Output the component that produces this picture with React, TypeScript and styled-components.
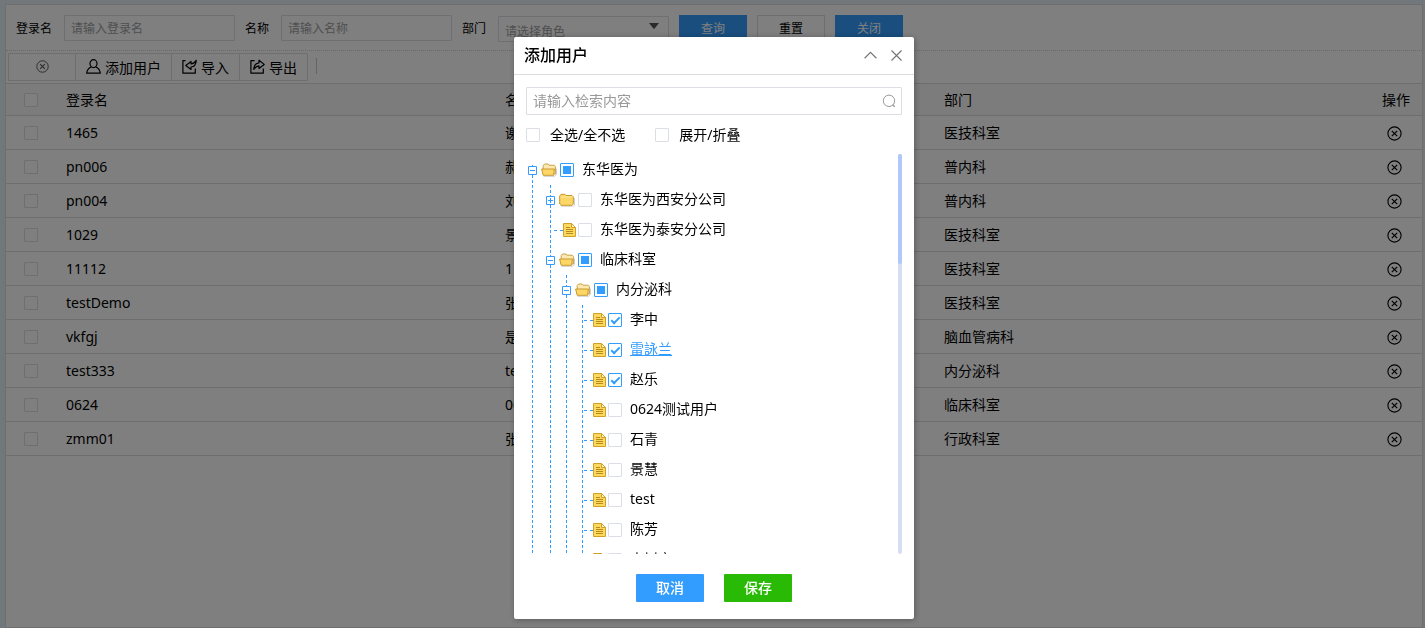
import React from "react";
import styled, { createGlobalStyle, css } from "styled-components";

const BLUE = "#339dff";
const BORDER = "#dcdcdc";
const FIELD_BORDER = "#dcdee6";

const GlobalStyle = createGlobalStyle`
  *, *::before, *::after { box-sizing: border-box; }
  body {
    margin: 0;
    background: #e4eff9;
    color: #000;
    font-family: "Noto Sans", "Noto Sans CJK SC", sans-serif;
    font-size: 14px;
    line-height: 20px;
    overflow: hidden;
  }
  button, input, select { font-family: inherit; color: inherit; }
  button { cursor: pointer; }
  svg { display: block; flex: none; }
`;

/* ---------- shared controls ---------- */

const Checkbox = styled.input.attrs({ type: "checkbox" })`
  appearance: none;
  flex: none;
  display: grid;
  place-items: center;
  width: 14px;
  height: 14px;
  margin: 0;
  border: 1px solid ${FIELD_BORDER};
  border-radius: 1px;
  background: #fff;

  &:checked,
  &:indeterminate {
    border-color: ${BLUE};
  }
  &:checked::after {
    content: "";
    width: 9px;
    height: 5px;
    margin-top: -2px;
    border: solid ${BLUE};
    border-width: 0 0 2px 2px;
    transform: rotate(-45deg);
  }
  &:indeterminate::after {
    content: "";
    width: 8px;
    height: 8px;
    background: ${BLUE};
  }
`;

const IconButton = styled.button`
  display: inline-flex;
  align-items: center;
  justify-content: center;
  padding: 0;
  border: 0;
  background: none;
`;

/* ---------- page ---------- */

const Page = styled.div`
  display: flex;
  min-height: 100vh;
  padding: 4px 2px 0 5px;
`;

const Panel = styled.main`
  flex: 1;
  min-width: 0;
  border: 1px solid ${BORDER};
  background: #fff;
`;

const FilterBar = styled.form`
  display: flex;
  align-items: flex-start;
  gap: 10px;
  height: 46px;
  padding: 10px;
  border-bottom: 1px dotted #d2d2d2;
  font-size: 12px;
  line-height: 28px;
`;

const Field = styled.label`
  display: flex;
  align-items: flex-start;
  gap: 12px;
`;

const fieldBox = css`
  width: 171px;
  height: 26px;
  border: 1px solid ${FIELD_BORDER};
  border-radius: 1px;
  background: #fff;
  font-size: 12px;
`;

const TextField = styled.input`
  ${fieldBox}
  padding: 0 6px;
  &::placeholder { color: #a0a0a0; }
`;

const SelectShell = styled.span`
  display: grid;
  height: 26px;
  margin-top: 1px;
  & > * { grid-area: 1 / 1; }
  & > svg {
    justify-self: end;
    margin: 7px 10px 0 0;
    pointer-events: none;
  }
`;

const Select = styled.select`
  ${fieldBox}
  appearance: none;
  padding: 5px 6px 0;
  color: #a0a0a0;
`;

const FilterButton = styled.button<{ $plain?: boolean }>`
  width: 68px;
  height: 26px;
  padding: 0;
  border: 1px solid ${(p) => (p.$plain ? BORDER : BLUE)};
  background: ${(p) => (p.$plain ? "#fff" : BLUE)};
  color: ${(p) => (p.$plain ? "#000" : "#fff")};
  font-size: 12px;
`;

const Toolbar = styled.div`
  display: flex;
  align-items: flex-start;
  height: 32px;
  padding: 2px;
`;

const ToolButton = styled.button<{ $blank?: boolean }>`
  display: flex;
  align-items: center;
  justify-content: center;
  gap: 4px;
  height: 28px;
  padding: 0 10px 1px;
  border: 1px solid ${BORDER};
  border-radius: 1px;
  background: #fff;
  font-size: 14px;
  & + & { margin-left: -1px; }
  ${(p) => p.$blank && "width: 68px; color: #555;"}
`;

const ToolDivider = styled.span`
  width: 1px;
  height: 16px;
  margin: 5px 0 0 8px;
  background: #c8c8c8;
`;

const Table = styled.table`
  width: 100%;
  table-layout: fixed;
  border-collapse: collapse;
  border-top: 1px solid ${BORDER};
`;

const Cell = styled.td<{ $center?: boolean }>`
  height: 34px;
  padding: 0 8px;
  border-bottom: 1px solid ${BORDER};
  text-align: ${(p) => (p.$center ? "center" : "left")};
  overflow: hidden;
  white-space: nowrap;
  & > ${Checkbox} { margin-left: 10px; }
  & > ${IconButton} { vertical-align: middle; margin-right: 4px; }
`;

const HeadCell = styled(Cell)`
  height: 32px;
  background: #f9f9f9;
  font-weight: 400;
`;

const Col = styled.col<{ $w?: string }>`
  width: ${(p) => p.$w ?? "auto"};
`;

/* ---------- dialog ---------- */

const Overlay = styled.div`
  position: fixed;
  inset: 0;
  display: flex;
  align-items: flex-start;
  justify-content: center;
  padding: 37px 0 0 3px;
  background: rgba(0, 0, 0, 0.5);
`;

const Dialog = styled.section`
  width: 400px;
  border-radius: 2px;
  background: #fff;
  box-shadow: 1px 1px 6px rgba(0, 0, 0, 0.3);
`;

const DialogHeader = styled.header`
  display: flex;
  align-items: center;
  gap: 14px;
  height: 38px;
  padding: 0 12px 1px 10px;
  border-bottom: 1px solid ${BORDER};
  color: #777;
`;

const DialogTitle = styled.h2`
  flex: 1;
  margin: 0;
  color: #000;
  font-size: 16px;
  font-weight: 500;
`;

const DialogBody = styled.div`
  padding: 12px 12px 0;
`;

const SearchBox = styled.label`
  display: flex;
  align-items: center;
  height: 28px;
  padding: 0 5px 0 6px;
  border: 1px solid ${FIELD_BORDER};
  border-radius: 1px;
  color: #999;
`;

const SearchInput = styled.input`
  flex: 1;
  min-width: 0;
  padding: 0 0 2px;
  border: 0;
  outline: 0;
  background: none;
  font-size: 14px;
  &::placeholder { color: #999; }
`;

const Options = styled.div`
  display: flex;
  gap: 30px;
  margin: 10px 0 9px;
`;

const Option = styled.label`
  display: flex;
  align-items: center;
  gap: 10px;
`;

const TreeArea = styled.div`
  display: flex;
  height: 400px;
`;

const TreeView = styled.div`
  flex: 1;
  min-width: 0;
  padding-top: 1px;
  overflow: hidden;
`;

const ScrollTrack = styled.div`
  width: 4px;
  border-radius: 2px;
  background: #d5def2;
`;

const ScrollThumb = styled.div`
  height: 110px;
  border-radius: 2px;
  background: #b0c8fa;
`;

const Branch = styled.ul<{ $indent: number; $root: boolean }>`
  margin: 0 0 0 ${(p) => p.$indent}px;
  padding: 0;
  list-style: none;
  background: repeating-linear-gradient(to bottom, ${BLUE} 0 3px, transparent 3px 5px) 0 ${(p) => (p.$root ? 10 : 0)}px / 1px 100% no-repeat;
`;

const NodeRow = styled.div`
  display: flex;
  align-items: center;
  height: 30px;
`;

const Toggle = styled(IconButton)`
  width: 9px;
  height: 9px;
  margin: 0 4px 0 -4px;
  background: #fff;
  color: ${BLUE};
`;

const Connector = styled.span<{ $wide?: boolean }>`
  width: 9px;
  height: 1px;
  margin-left: ${(p) => (p.$wide ? 4 : 2)}px;
  background: repeating-linear-gradient(to right, ${BLUE} 0 3px, transparent 3px 6px);
`;

const NodeIcon = styled.span<{ $gap: number }>`
  margin-right: ${(p) => p.$gap}px;
`;

const NodeName = styled.a<{ $active?: boolean }>`
  margin-left: 8px;
  padding-bottom: 2px;
  color: ${(p) => (p.$active ? BLUE : "#000")};
  text-decoration: ${(p) => (p.$active ? "underline" : "none")};
  white-space: nowrap;
`;

const DialogFooter = styled.footer`
  display: flex;
  justify-content: center;
  gap: 20px;
  padding: 20px 0 17px;
`;

const ActionButton = styled.button<{ $tone: string }>`
  width: 68px;
  height: 28px;
  padding: 0 0 2px;
  border: 0;
  border-radius: 1px;
  background: ${(p) => p.$tone};
  color: #fff;
  font-size: 14px;
  font-weight: 500;
`;

/* ---------- icons ---------- */

const CircleX = ({ size = 15 }: { size?: number }) => (
  <svg width={size} height={size} viewBox="0 0 15 15" fill="none" stroke="currentColor">
    <circle cx="7.5" cy="7.5" r="6.6" strokeWidth="1.1" />
    <path d="M4.8 4.8l5.4 5.4M10.2 4.8l-5.4 5.4" strokeWidth="1.2" />
  </svg>
);

const UserIcon = () => (
  <svg width="15" height="15" viewBox="0 0 15 15" fill="none" stroke="currentColor" strokeWidth="1.2" strokeLinejoin="round">
    <ellipse cx="7.5" cy="4.6" rx="3.5" ry="4" />
    <path d="M5.2 8C2.6 9 1 11 .7 14.2h13.6C14 11 12.4 9 9.8 8" />
  </svg>
);

const ImportIcon = () => (
  <svg width="15" height="15" viewBox="0 0 15 15" fill="none" stroke="currentColor" strokeWidth="1.2" strokeLinejoin="round">
    <path d="M3.6 1.6H.9v12.600h12.400V9.600" />
    <path d="M14.200 1.400c-.1 4-2 6.200-5.200 6.600v2.400L3.800 6.400 9 2.400V5c2.200-.1 3.900-1.200 5.200-3.600z" />
  </svg>
);

const ExportIcon = () => (
  <svg width="15" height="15" viewBox="0 0 15 15" fill="none" stroke="currentColor" strokeWidth="1.2" strokeLinejoin="round">
    <path d="M4.600 1.600H.9v12.600h12.400V9.600" />
    <path d="M3.800 10.400c.1-4 2-6.200 5.200-6.600V1.200l5.200 4.200L9 9.400V6.800c-2.200.1-3.900 1.200-5.200 3.600z" />
  </svg>
);

const CaretDown = () => (
  <svg width="10" height="6" viewBox="0 0 10 6">
    <path d="M0 0h10L5.600 5.400q-.6.6-1.200 0z" fill="#555" />
  </svg>
);

const ChevronUp = () => (
  <svg width="13" height="12" viewBox="0 0 13 12" fill="none" stroke="currentColor" strokeWidth="1.2">
    <path d="M.6 9.200l5.900-5.800 5.900 5.800" />
  </svg>
);

const CloseIcon = () => (
  <svg width="11" height="11" viewBox="0 0 11 11" fill="none" stroke="currentColor" strokeWidth="1.200">
    <path d="M.5.5l10 10M10.500.5l-10 10" />
  </svg>
);

const SearchIcon = () => (
  <svg width="14" height="14" viewBox="0 0 14 14" fill="none" stroke="currentColor">
    <circle cx="7" cy="6.800" r="5.700" />
    <path d="M10.600 10.800l2.200 2" strokeWidth="1.300" />
  </svg>
);

const ToggleIcon = ({ open }: { open: boolean }) => (
  <svg width="9" height="9" viewBox="0 0 9 9" fill="none" stroke="currentColor">
    <path d={open ? "M.5.5h8v8h-8zM2 4.500h5" : "M.5.5h8v8h-8zM2 4.500h5M4.500 2v5"} />
  </svg>
);

const FolderOpen = () => (
  <svg width="16" height="14" viewBox="0 0 16 14">
    <path d="M2.500 13.300h11.300l1.700-2V5.500" fill="none" stroke="#cfcfcf" />
    <path d="M2.200 11V2.500l1.300-1.500h3.500l1 1.200h5.200l1.200 1.200V11z" fill="#fbe9b0" stroke="#c9a24a" />
    <path d="M.6 6h12.800l-.8 6.300H2.200z" fill="#fcd667" stroke="#c8992f" strokeLinejoin="round" />
  </svg>
);

const FolderClosed = () => (
  <svg width="16" height="14" viewBox="0 0 16 14">
    <path d="M2 13.200h12.500l1-1V5" fill="none" stroke="#cfcfcf" />
    <path d="M.7 3l1.300-1.700h4L7.200 2.500h5.800l1.300 1.300v7.200L13 12.300H2L.7 11z" fill="#fcd667" stroke="#c8992f" />
    <path d="M1.500 4h12" stroke="#fde59a" />
  </svg>
);

const DocIcon = () => (
  <svg width="13" height="14" viewBox="0 0 13 14">
    <path d="M.5.5h8l4 4v9H.5z" fill="#fcd85c" stroke="#cfa02c" />
    <path d="M8.500.5v4h4z" fill="#fff3c4" stroke="#cfa02c" />
    <path d="M3 4.500h4M3 6.500h7M3 8.500h7M3 10.500h7" stroke="#b98a1c" />
  </svg>
);

/* ---------- data ---------- */

type Check = "on" | "off" | "partial";

interface TreeNode {
  name: string;
  check?: Check;
  active?: boolean;
  open?: boolean;
  folder?: boolean;
  children?: TreeNode[];
}

const users = [
  ["1465", "谢敏", "医技科室"],
  ["pn006", "郝静", "普内科"],
  ["pn004", "刘洋", "普内科"],
  ["1029", "景慧", "医技科室"],
  ["11112", "11112", "医技科室"],
  ["testDemo", "张宇", "医技科室"],
  ["vkfgj", "是谁", "脑血管病科"],
  ["test333", "test", "内分泌科"],
  ["0624", "0624测试用户", "临床科室"],
  ["zmm01", "张敏", "行政科室"],
];

const tree: TreeNode[] = [
  {
    name: "东华医为",
    check: "partial",
    folder: true,
    open: true,
    children: [
      { name: "东华医为西安分公司", folder: true },
      { name: "东华医为泰安分公司" },
      {
        name: "临床科室",
        check: "partial",
        folder: true,
        open: true,
        children: [
          {
            name: "内分泌科",
            check: "partial",
            folder: true,
            open: true,
            children: [
              { name: "李中", check: "on" },
              { name: "雷詠兰", check: "on", active: true },
              { name: "赵乐", check: "on" },
              { name: "0624测试用户" },
              { name: "石青" },
              { name: "景慧" },
              { name: "test" },
              { name: "陈芳" },
              { name: "李树宁" },
            ],
          },
        ],
      },
    ],
  },
];

const INDENTS = [6, 18, 16, 16];

function TreeBranch({ nodes, depth = 0 }: { nodes: TreeNode[]; depth?: number }) {
  const mixed = nodes.some((n) => n.folder);
  return (
    <Branch $indent={INDENTS[depth]} $root={depth === 0}>
      {nodes.map((node) => (
        <li key={node.name}>
          <NodeRow>
            {node.folder ? (
              <>
                <Toggle type="button" aria-label={node.open ? "折叠" : "展开"}>
                  <ToggleIcon open={!!node.open} />
                </Toggle>
                <NodeIcon $gap={3}>{node.open ? <FolderOpen /> : <FolderClosed />}</NodeIcon>
              </>
            ) : (
              <>
                <Connector $wide={mixed} />
                <NodeIcon $gap={2}>
                  <DocIcon />
                </NodeIcon>
              </>
            )}
            <Checkbox
              aria-label={node.name}
              defaultChecked={node.check === "on"}
              ref={(el: HTMLInputElement | null) => {
                if (el) el.indeterminate = node.check === "partial";
              }}
            />
            <NodeName href="#" $active={node.active}>
              {node.name}
            </NodeName>
          </NodeRow>
          {node.children && <TreeBranch nodes={node.children} depth={depth + 1} />}
        </li>
      ))}
    </Branch>
  );
}

export default function App() {
  return (
    <>
      <GlobalStyle />
      <Page>
        <Panel>
          <FilterBar>
            <Field>
              登录名
              <TextField placeholder="请输入登录名" />
            </Field>
            <Field>
              名称
              <TextField placeholder="请输入名称" />
            </Field>
            <Field>
              部门
              <SelectShell>
                <Select defaultValue="">
                  <option value="">请选择角色</option>
                </Select>
                <CaretDown />
              </SelectShell>
            </Field>
            <FilterButton type="button">查询</FilterButton>
            <FilterButton type="button" $plain>
              重置
            </FilterButton>
            <FilterButton type="button">关闭</FilterButton>
          </FilterBar>

          <Toolbar>
            <ToolButton type="button" $blank aria-label="删除">
              <CircleX size={13} />
            </ToolButton>
            <ToolButton type="button">
              <UserIcon />
              添加用户
            </ToolButton>
            <ToolButton type="button">
              <ImportIcon />
              导入
            </ToolButton>
            <ToolButton type="button">
              <ExportIcon />
              导出
            </ToolButton>
            <ToolDivider />
          </Toolbar>

          <Table>
            <colgroup>
              <Col $w="52px" />
              <Col $w="31%" />
              <Col $w="31%" />
              <Col />
              <Col $w="52px" />
            </colgroup>
            <thead>
              <tr>
                <HeadCell as="th">
                  <Checkbox aria-label="全选" />
                </HeadCell>
                <HeadCell as="th">登录名</HeadCell>
                <HeadCell as="th">名称</HeadCell>
                <HeadCell as="th">部门</HeadCell>
                <HeadCell as="th" $center>
                  操作
                </HeadCell>
              </tr>
            </thead>
            <tbody>
              {users.map(([login, name, dept]) => (
                <tr key={login}>
                  <Cell>
                    <Checkbox aria-label={login} />
                  </Cell>
                  <Cell>{login}</Cell>
                  <Cell>{name}</Cell>
                  <Cell>{dept}</Cell>
                  <Cell $center>
                    <IconButton type="button" aria-label="删除">
                      <CircleX />
                    </IconButton>
                  </Cell>
                </tr>
              ))}
            </tbody>
          </Table>
        </Panel>
      </Page>

      <Overlay>
        <Dialog role="dialog" aria-label="添加用户">
          <DialogHeader>
            <DialogTitle>添加用户</DialogTitle>
            <IconButton type="button" aria-label="收起">
              <ChevronUp />
            </IconButton>
            <IconButton type="button" aria-label="关闭">
              <CloseIcon />
            </IconButton>
          </DialogHeader>
          <DialogBody>
            <SearchBox>
              <SearchInput placeholder="请输入检索内容" aria-label="检索" />
              <SearchIcon />
            </SearchBox>
            <Options>
              <Option>
                <Checkbox />
                全选/全不选
              </Option>
              <Option>
                <Checkbox />
                展开/折叠
              </Option>
            </Options>
            <TreeArea>
              <TreeView>
                <TreeBranch nodes={tree} />
              </TreeView>
              <ScrollTrack>
                <ScrollThumb />
              </ScrollTrack>
            </TreeArea>
          </DialogBody>
          <DialogFooter>
            <ActionButton type="button" $tone={BLUE}>
              取消
            </ActionButton>
            <ActionButton type="button" $tone="#28ba05">
              保存
            </ActionButton>
          </DialogFooter>
        </Dialog>
      </Overlay>
    </>
  );
}
